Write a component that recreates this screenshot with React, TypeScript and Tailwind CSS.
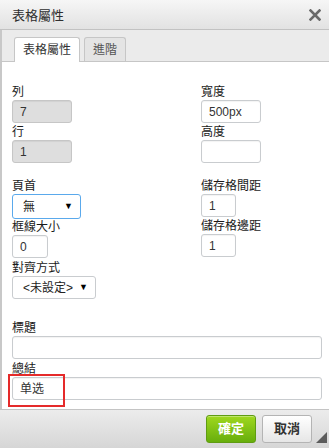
import React from "react";

const font = { fontFamily: '"Liberation Sans", "Noto Sans CJK TC", sans-serif' };

function Label({ children, className = "" }: { children: React.ReactNode; className?: string }) {
  return <div className={`h-[16px] text-[12px] leading-[16px] text-[#1a1a1a] whitespace-nowrap ${className}`}>{children}</div>;
}

function Input({ value = "", w, disabled = false, h = "h-[23px]" }: { value?: string; w: string; disabled?: boolean; h?: string }) {
  return (
    <div
      className={`${w} ${h} rounded-[3px] border text-[12px] flex items-center pl-[7px] text-[#333] ${
        disabled
          ? "bg-[#dedede] border-[#c6c6c6] shadow-[inset_0_1px_1px_rgba(0,0,0,0.06)]"
          : "bg-white border-[#c9cccf] shadow-[inset_0_1px_1px_rgba(0,0,0,0.05)]"
      }`}
    >
      {value}
    </div>
  );
}

function Select({ value, w, focused = false, h }: { value: string; w: string; focused?: boolean; h: string }) {
  return (
    <div
      className={`${w} ${h} rounded-[3px] border bg-white flex items-center justify-between pl-[10px] pr-[7px] text-[12px] text-[#222] ${
        focused ? "border-[#5aa9ec]" : "border-[#c9cccf]"
      }`}
    >
      <span>{value}</span>
      <span className="text-[9px] text-black">▼</span>
    </div>
  );
}

export default function App() {
  return (
    <div className="w-[329px] h-[448px] overflow-hidden bg-white flex flex-col relative" style={font}>
      {/* title bar */}
      <div className="h-[30px] shrink-0 border-b border-[#c2c2c2] bg-gradient-to-b from-[#f6f6f6] to-[#e2e2e2] flex items-center justify-between pl-[12px] pr-[7px]">
        <span className="text-[13px] text-[#2e2e2e] pt-[2px]">表格屬性</span>
        <svg width="12" height="12" viewBox="0 0 12 12" className="mr-[1px] mt-[1px]">
          <path d="M1.5 1.5 L10.5 10.5 M10.5 1.5 L1.5 10.5" stroke="#6b6b6b" strokeWidth="2.6" strokeLinecap="square" />
        </svg>
      </div>

      {/* tabs */}
      <div className="h-[32px] shrink-0 bg-[#ebebeb] border-b border-[#c6c6c6] flex items-end pl-[12px] gap-[4px] border-l-2 border-l-[#c8c8c8]">
        <div className="h-[25px] -mb-[1px] px-[8px] bg-white border border-b-0 border-[#c6c6c6] rounded-t-[3px] text-[12px] text-[#333] flex items-center">
          表格屬性
        </div>
        <div className="h-[24px] px-[8px] bg-[#e4e4e4] border border-b-0 border-[#c6c6c6] rounded-t-[3px] text-[12px] text-[#555] flex items-center">
          進階
        </div>
      </div>

      {/* body */}
      <div className="flex-1 border-l-2 border-[#c8c8c8] pl-[10px] pr-[7px] pt-[22px] flex flex-col">
        {/* row 1 */}
        <div className="flex">
          <div className="w-[189px] flex flex-col">
            <Label>列</Label>
            <Input value="7" w="w-[60px]" disabled />
            <Label className="mt-[1px]">行</Label>
            <Input value="1" w="w-[60px]" disabled />
          </div>
          <div className="flex flex-col">
            <Label>寬度</Label>
            <Input value="500px" w="w-[60px]" />
            <Label className="mt-[1px]">高度</Label>
            <Input w="w-[60px]" />
          </div>
        </div>

        {/* row 2 */}
        <div className="flex mt-[15px]">
          <div className="w-[189px] flex flex-col">
            <Label>頁首</Label>
            <Select value="無" w="w-[69px]" h="h-[25px]" focused />
            <Label>框線大小</Label>
            <Input value="0" w="w-[36px]" />
            <Label className="mt-[2px]">對齊方式</Label>
            <Select value="<未設定>" w="w-[84px]" h="h-[23px]" />
          </div>
          <div className="flex flex-col">
            <Label>儲存格間距</Label>
            <Input value="1" w="w-[35px]" />
            <Label className="mt-[1px]">儲存格邊距</Label>
            <Input value="1" w="w-[35px]" />
          </div>
        </div>

        {/* caption / summary */}
        <Label className="mt-[21px]">標題</Label>
        <Input w="w-[310px]" />
        <Label className="mt-[2px]">總結</Label>
        <div className="relative">
          <Input value="单选" w="w-[310px]" />
          <div className="absolute left-[-4px] top-[-3px] w-[57px] h-[33px] border-2 border-[#e52a2a]" />
        </div>
      </div>

      {/* footer */}
      <div className="h-[39px] shrink-0 border-t border-[#c4c4c4] bg-gradient-to-b from-[#ececec] to-[#d6d6d6] flex items-center justify-end gap-[6px] pr-[17px] pl-[2px] relative">
        <div className="w-[50px] h-[28px] rounded-[3px] border border-[#5f9c12] bg-gradient-to-b from-[#9fd81e] to-[#67ae0c] text-white text-[13px] font-bold flex items-center justify-center shadow-[inset_0_1px_0_rgba(255,255,255,0.35)]">
          確定
        </div>
        <div className="w-[50px] h-[28px] rounded-[3px] border border-[#b4b4b4] bg-gradient-to-b from-[#ffffff] to-[#e6e6e6] text-[#333] text-[13px] font-bold flex items-center justify-center">
          取消
        </div>
        <svg width="11" height="11" viewBox="0 0 11 11" className="absolute right-[2px] bottom-[5px]">
          <path d="M11 0 L11 11 L0 11 Z" fill="#5c5c5c" />
        </svg>
      </div>
    </div>
  );
}
